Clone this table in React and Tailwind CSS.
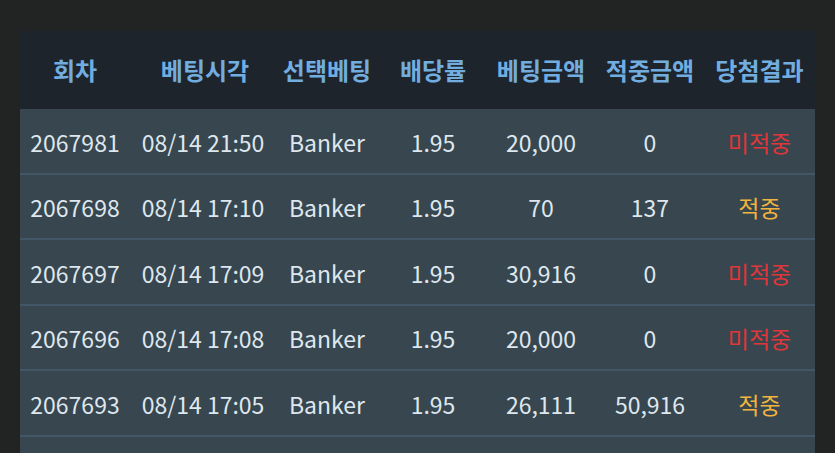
export default function App() {
  const rows = [
    ["2067981", "08/14 21:50", "Banker", "1.95", "20,000", "0", false],
    ["2067698", "08/14 17:10", "Banker", "1.95", "70", "137", true],
    ["2067697", "08/14 17:09", "Banker", "1.95", "30,916", "0", false],
    ["2067696", "08/14 17:08", "Banker", "1.95", "20,000", "0", false],
    ["2067693", "08/14 17:05", "Banker", "1.95", "26,111", "50,916", true],
    ["", "", "", "", "", "", null],
  ];
  const cols = "grid grid-cols-[110px_150px_94px_118px_98px_120px_105px]";
  const font = { fontFamily: '"Noto Sans CJK KR", "Noto Sans", sans-serif' };
  return (
    <div className="w-[835px] h-[453px] bg-[#222323] overflow-hidden pt-[31px] pl-[20px]" style={font}>
      <div className="w-[795px]">
        <div className={`${cols} h-[78px] items-center bg-[#1e242b] text-[#72ade0] font-bold text-[24px] text-center`}>
          <div>회차</div>
          <div>베팅시각</div>
          <div>선택베팅</div>
          <div>배당률</div>
          <div>베팅금액</div>
          <div>적중금액</div>
          <div className="pr-[6px]">당첨결과</div>
        </div>
        {rows.map((r, i) => (
          <div
            key={i}
            className={`${cols} h-[65.5px] items-center bg-[#37464f] border-b-2 border-[#415667] text-[#dfe7ee] text-[23px] text-center pt-[2px]`}
          >
            <div>{r[0]}</div>
            <div className="pr-[4px]">{r[1]}</div>
            <div>{r[2]}</div>
            <div>{r[3]}</div>
            <div>{r[4]}</div>
            <div>{r[5]}</div>
            <div className={`pr-[6px] ${r[6] ? "text-[#f2b43f]" : "text-[#e0363a]"}`}>
              {r[6] === null ? "" : r[6] ? "적중" : "미적중"}
            </div>
          </div>
        ))}
      </div>
    </div>
  );
}
